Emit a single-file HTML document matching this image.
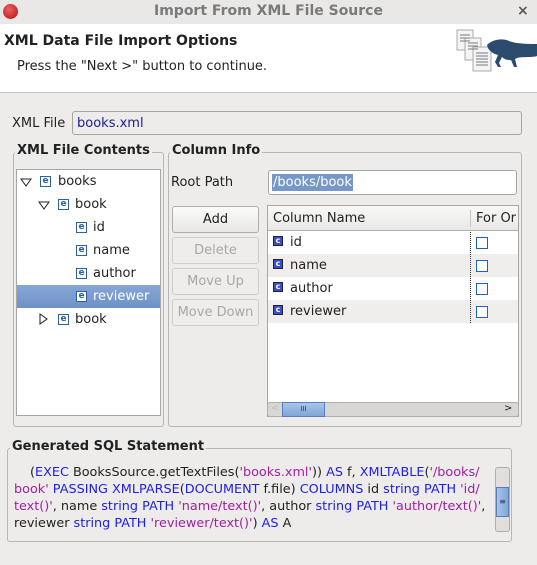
<!DOCTYPE html>
<html><head><style>
*{box-sizing:border-box;margin:0;padding:0}
body{width:537px;height:565px;background:#edeceb;font-family:"DejaVu Sans","Liberation Sans",sans-serif;font-size:13px;color:#222;position:relative;overflow:hidden}
.a{position:absolute;white-space:nowrap}
.grp{position:absolute;border:1px solid #b8b6b2;border-radius:3px}
.gl{position:absolute;font-weight:bold;background:#edeceb;padding:0 2px;font-size:13px}
.btn{position:absolute;left:172px;width:87px;height:27px;border:1px solid #b0aea9;border-radius:3px;background:linear-gradient(#fbfbfa,#e8e7e5);text-align:center;line-height:25px}
.dis{color:#a9a7a3;border-color:#cfcdc9;background:#eeedeb}
.e{position:absolute;width:11px;height:11px;border:1px solid #2d5fa3;background:#fff;color:#2d5fa3;font-size:9px;font-weight:bold;line-height:9px;text-align:center}
.c{position:absolute;width:10px;height:10px;background:#3a4fd0;border:1px solid #223;color:#fff;font-size:8px;font-weight:bold;line-height:8px;text-align:center}
.cb{position:absolute;left:476px;width:12px;height:12px;border:1px solid #1d5fc8;background:#fff}
.k{color:#2020e0}.s{color:#a020a0}
</style></head><body>
<div class="a" style="left:0;top:0;width:537px;height:24px;background:#e9e8e6"></div>
<div class="a" style="left:3px;top:4px;width:15px;height:15px;border-radius:50%;background:radial-gradient(circle at 40% 35%,#f06060,#b01010)"></div>
<div class="a" style="left:0;top:3px;width:537px;text-align:center;font-weight:bold;color:#7a7a7a;font-size:14px">Import From XML File Source</div>
<div class="a" style="left:517px;top:3px;color:#555;font-size:14px;font-weight:bold">×</div>
<div class="a" style="left:0;top:24px;width:537px;height:69px;background:#fff;border-bottom:1px solid #c9c7c3"></div>
<div class="a" style="left:4px;top:33px;font-weight:bold;font-size:14px">XML Data File Import Options</div>
<div class="a" style="left:17px;top:59px;font-size:13px">Press the "Next &gt;" button to continue.</div>
<svg class="a" style="left:455px;top:28px" width="82" height="48" viewBox="0 0 82 48">
<g fill="#f4f4f4" stroke="#aaa"><rect x="2" y="2" width="16" height="20"/><rect x="10" y="10" width="16" height="22"/><rect x="18" y="19" width="18" height="24"/></g>
<g stroke="#777"><path d="M5 7h10M5 10h10M5 13h10M13 15h10M13 18h10M13 21h10M21 25h12M21 28h12M21 31h12M21 34h12M21 37h12"/></g>
<path d="M32 17c6-6 16-7 22-4c6 2 12 3 28 3v12c-6 2-18 0-22 3l2 8h-3l-3-7c-3 0-6 0-9-3l-3 6l2 4h-3l-3-5l3-7c-4-1-10-4-11-10z" fill="#2a4a6e"/>
</svg>
<div class="a" style="left:12px;top:116px">XML File</div>
<div class="a" style="left:72px;top:111px;width:450px;height:24px;border:1px solid #a8a6a2;border-radius:3px;background:#edeceb;color:#1a1a90;padding:4px 4px;line-height:16px">books.xml</div>

<div class="grp" style="left:13px;top:152px;width:151px;height:275px"></div>
<div class="gl" style="left:15px;top:143px">XML File Contents</div>
<div class="a" style="left:16px;top:169px;width:145px;height:247px;background:#fff;border:1px solid #a8a6a2"></div>
<div class="a" style="left:17px;top:285px;width:143px;height:23px;background:linear-gradient(#86a6d6,#6f92c6)"></div>
<svg class="a" style="left:20px;top:178px" width="12" height="9"><path d="M1 1h10L6 8z" fill="none" stroke="#222"/></svg>
<svg class="a" style="left:38px;top:201px" width="12" height="9"><path d="M1 1h10L6 8z" fill="none" stroke="#222"/></svg>
<svg class="a" style="left:39px;top:313px" width="9" height="12"><path d="M1 1v10L8 6z" fill="none" stroke="#222"/></svg>
<div class="e" style="left:40px;top:176px">e</div><div class="a" style="left:58px;top:174px">books</div>
<div class="e" style="left:58px;top:199px">e</div><div class="a" style="left:75px;top:197px">book</div>
<div class="e" style="left:76px;top:222px">e</div><div class="a" style="left:93px;top:220px">id</div>
<div class="e" style="left:76px;top:245px">e</div><div class="a" style="left:93px;top:243px">name</div>
<div class="e" style="left:76px;top:268px">e</div><div class="a" style="left:93px;top:266px">author</div>
<div class="e" style="left:76px;top:291px">e</div><div class="a" style="left:93px;top:289px;color:#fff">reviewer</div>
<div class="e" style="left:58px;top:314px">e</div><div class="a" style="left:75px;top:312px">book</div>

<div class="grp" style="left:168px;top:152px;width:354px;height:275px"></div>
<div class="gl" style="left:170px;top:143px">Column Info</div>
<div class="a" style="left:171px;top:175px">Root Path</div>
<div class="a" style="left:268px;top:170px;width:249px;height:25px;border:1px solid #a8a6a2;border-radius:3px;background:#fff"></div>
<div class="a" style="left:272px;top:174px;background:#7598c9;color:#fff;line-height:17px;padding:0 1px">/books/book</div>
<div class="btn" style="top:206px;line-height:26px">Add</div>
<div class="btn dis" style="top:237px;line-height:26px">Delete</div>
<div class="btn dis" style="top:268px;line-height:26px">Move Up</div>
<div class="btn dis" style="top:299px;line-height:26px">Move Down</div>

<div class="a" style="left:267px;top:205px;width:252px;height:212px;background:#fff;border:1px solid #a8a6a2;overflow:hidden">
 <div class="a" style="left:0;top:0;width:252px;height:25px;background:linear-gradient(#f8f8f7,#e9e8e6);border-bottom:1px solid #b0aea9"></div>
 <div class="a" style="left:5px;top:5px">Column Name</div>
 <div class="a" style="left:202px;top:4px;width:1px;height:17px;background:#c9c7c3"></div>
 <div class="a" style="left:208px;top:5px">For Or</div>
 <div class="a" style="left:0;top:48px;width:252px;height:23px;background:#efeeed"></div>
 <div class="a" style="left:0;top:94px;width:252px;height:23px;background:#efeeed"></div>
 <div class="a" style="left:202px;top:26px;height:91px;border-left:1px dotted #333"></div>
</div>
<div class="c" style="left:273px;top:236px">c</div><div class="a" style="left:290px;top:235px">id</div>
<div class="c" style="left:273px;top:259px">c</div><div class="a" style="left:290px;top:258px">name</div>
<div class="c" style="left:273px;top:282px">c</div><div class="a" style="left:290px;top:281px">author</div>
<div class="c" style="left:273px;top:305px">c</div><div class="a" style="left:290px;top:304px">reviewer</div>
<div class="cb" style="top:237px"></div><div class="cb" style="top:260px"></div><div class="cb" style="top:283px"></div><div class="cb" style="top:306px"></div>
<div class="a" style="left:267px;top:402px;width:252px;height:15px;background:#d8d7d5;border:1px solid #b0aea9;border-radius:3px"></div>
<div class="a" style="left:282px;top:402px;width:43px;height:15px;background:linear-gradient(#a9c4e8,#80a6d8);border:1px solid #5a7fb8;text-align:center;font-size:7px;line-height:12px;color:#335">III</div>
<div class="a" style="left:504px;top:403px;font-size:10px;color:#222">&gt;</div>
<div class="a" style="left:271px;top:403px;font-size:10px;color:#bbb">&lt;</div>

<div class="grp" style="left:7px;top:448px;width:505px;height:94px"></div>
<div class="gl" style="left:10px;top:439px">Generated SQL Statement</div>
<div class="a" style="left:14px;top:464px;line-height:17px;font-size:12.8px"><span style="padding-left:16px"></span>(<span class="k">EXEC</span> BooksSource.getTextFiles(<span class="s">'books.xml'</span>)) <span class="k">AS</span> f, <span class="k">XMLTABLE</span>(<span class="s">'/books/</span><br><span class="s">book'</span> <span class="k">PASSING XMLPARSE</span>(<span class="k">DOCUMENT</span> f.file) <span class="k">COLUMNS</span> id <span class="k">string PATH</span> <span class="s">'id/</span><br><span class="s">text()'</span>, name <span class="k">string PATH</span> <span class="s">'name/text()'</span>, author <span class="k">string PATH</span> <span class="s">'author/text()'</span>,<br>reviewer <span class="k">string PATH</span> <span class="s">'reviewer/text()'</span>) <span class="k">AS</span> A</div>
<div class="a" style="left:495px;top:467px;width:15px;height:65px;background:#e0dfdd;border:1px solid #b0aea9;border-radius:3px"></div>
<div class="a" style="left:496px;top:487px;width:13px;height:30px;background:linear-gradient(90deg,#a9c4e8,#80a6d8);border:1px solid #5a7fb8;text-align:center;font-size:8px;line-height:28px;color:#335">≡</div>
</body></html>
